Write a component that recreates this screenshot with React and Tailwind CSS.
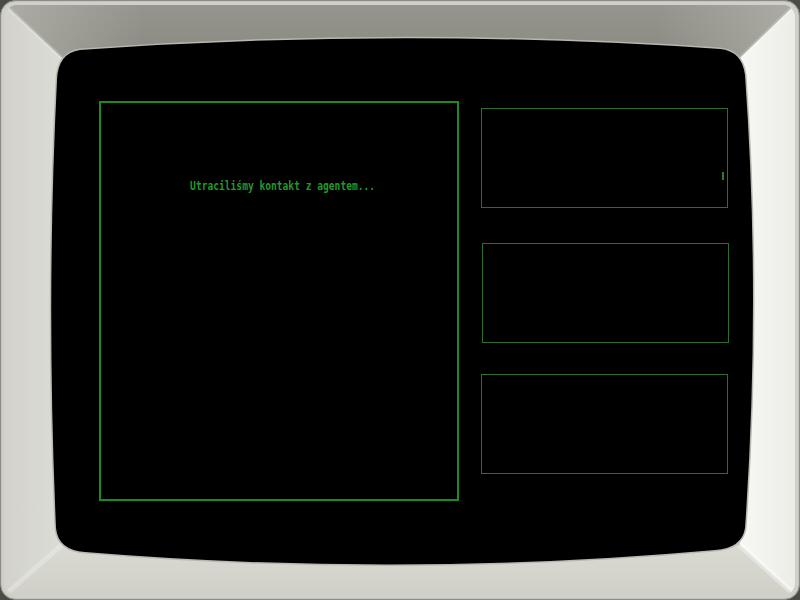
import React from "react";

const SCREEN =
  "M 80 50 Q 400 27 720 49 Q 742 51 745 75 Q 761 300 745 528 Q 742 548 715 550 Q 400 578 85 552 Q 58 550 56 528 Q 46 300 57 80 Q 58 53 80 50 Z";

function Bezel() {
  return (
    <svg className="absolute inset-0" width="800" height="600" viewBox="0 0 800 600">
      <defs>
        <linearGradient id="topg" x1="0" y1="0" x2="0" y2="1">
          <stop offset="0" stopColor="#96968e" />
          <stop offset="1" stopColor="#8a8a82" />
        </linearGradient>
        <linearGradient id="topside" x1="0" y1="0" x2="1" y2="0">
          <stop offset="0" stopColor="#b8b8b0" stopOpacity="0.7" />
          <stop offset="0.18" stopColor="#b8b8b0" stopOpacity="0" />
          <stop offset="0.82" stopColor="#b8b8b0" stopOpacity="0" />
          <stop offset="1" stopColor="#b8b8b0" stopOpacity="0.7" />
        </linearGradient>
        <linearGradient id="leftg" x1="0" y1="0" x2="1" y2="0">
          <stop offset="0" stopColor="#d2d2cb" />
          <stop offset="1" stopColor="#dcdcd6" />
        </linearGradient>
        <linearGradient id="rightg" x1="0" y1="0" x2="1" y2="0">
          <stop offset="0" stopColor="#f7f7f3" />
          <stop offset="1" stopColor="#ecece7" />
        </linearGradient>
        <linearGradient id="botg" x1="0" y1="0" x2="0" y2="1">
          <stop offset="0" stopColor="#dadad3" />
          <stop offset="1" stopColor="#cfcfc8" />
        </linearGradient>
        <clipPath id="inner">
          <rect x="5" y="5" width="790" height="590" rx="12" />
        </clipPath>
      </defs>
      <rect width="800" height="600" fill="#4a4a47" />
      <rect x="0.5" y="0.5" width="799" height="599" rx="15" fill="#c4c4bc" stroke="#8c8c86" />
      <rect x="2" y="2" width="796" height="596" rx="14" fill="#d0d0c9" />
      <g clipPath="url(#inner)">
        <polygon points="0,0 800,0 740,58 62,58" fill="url(#topg)" />
        <polygon points="0,0 800,0 740,58 62,58" fill="url(#topside)" />
        <polygon points="0,0 62,58 62,545 0,600" fill="url(#leftg)" />
        <polygon points="800,0 800,600 740,545 740,58" fill="url(#rightg)" />
        <polygon points="0,600 62,545 740,545 800,600" fill="url(#botg)" />
        <line x1="6" y1="6" x2="62" y2="58" stroke="#ffffff" strokeOpacity="0.2" strokeWidth="4" />
        <line x1="794" y1="6" x2="740" y2="58" stroke="#ffffff" strokeOpacity="0.2" strokeWidth="4" />
        <line x1="6" y1="594" x2="62" y2="545" stroke="#ffffff" strokeOpacity="0.25" strokeWidth="5" />
        <line x1="794" y1="594" x2="740" y2="545" stroke="#ffffff" strokeOpacity="0.35" strokeWidth="6" />
      </g>
      <path d={SCREEN} fill="none" stroke="#b8b8b0" strokeWidth="3" />
      <path d={SCREEN} fill="#000000" />
    </svg>
  );
}

export default function App() {
  return (
    <div className="relative w-[800px] h-[600px] overflow-hidden bg-black">
      <Bezel />
      <div className="relative flex pl-[99px] pt-[101px]">
        <div className="w-[360px] h-[400px] border-2 border-[#1f8a24] flex justify-center pt-[76px] pl-[8px]">
          <div
            className="text-[12px] leading-[14px] font-bold text-[#22982a] scale-x-[0.8] whitespace-nowrap h-[14px]"
            style={{ fontFamily: '"DejaVu Sans Mono", "Liberation Mono", monospace' }}
          >
            Utraciliśmy kontakt z agentem...
          </div>
        </div>
        <div className="flex flex-col ml-[22px]">
          <div className="relative mt-[7px] w-[247px] h-[100px] border border-[#2b6e2e]">
            <div className="absolute right-[3px] top-[63px] w-[2px] h-[8px] bg-[#2f7a33]" />
          </div>
          <div className="mt-[35px] ml-[1px] w-[247px] h-[100px] border border-[#2b6e2e]" />
          <div className="mt-[31px] w-[247px] h-[100px] border border-[#2b6e2e]" />
        </div>
      </div>
    </div>
  );
}
